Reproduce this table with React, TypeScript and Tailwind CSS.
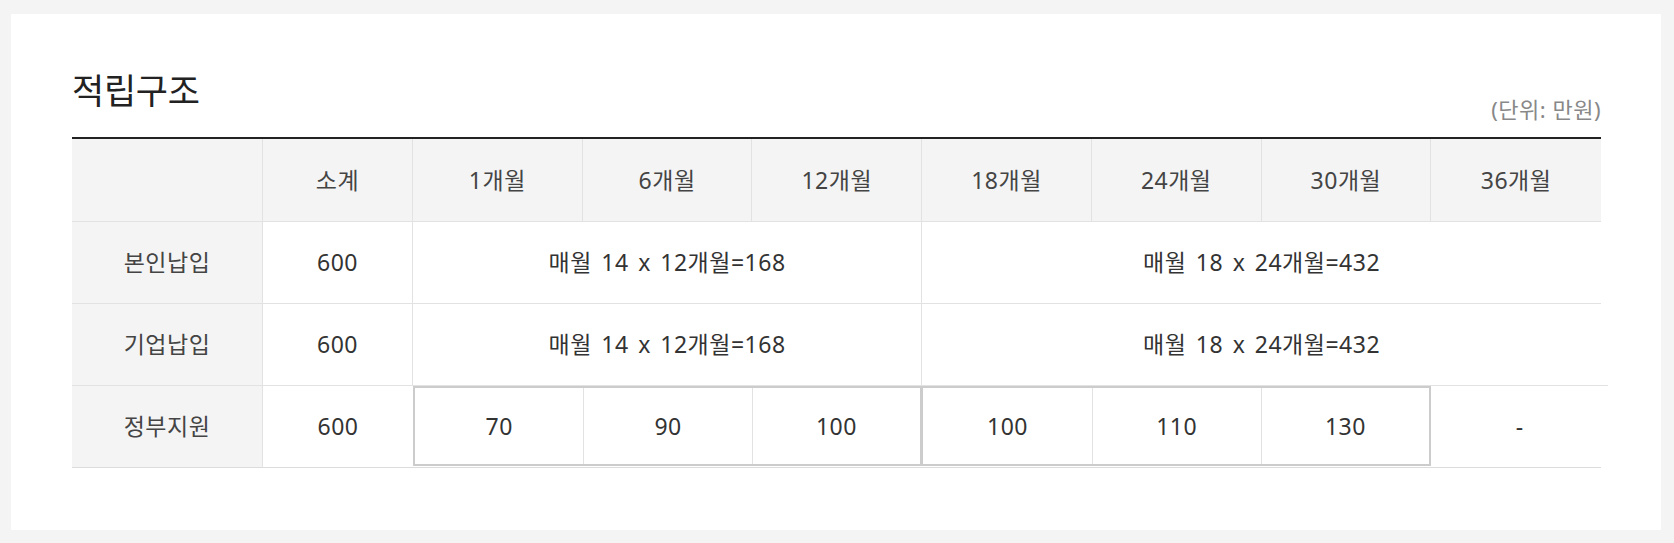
import React from "react";

const font = { fontFamily: "'Noto Sans', 'Noto Sans CJK KR', sans-serif" };

const months = ["1개월", "6개월", "12개월", "18개월", "24개월", "30개월", "36개월"];

export default function App() {
  return (
    <div className="w-[1674px] h-[543px] bg-[#f4f4f4] pt-[14px] pl-[11px]" style={font}>
      <div className="w-[1650px] h-[516px] bg-white pl-[61px] pt-[59px]">
        <div className="w-[1529px] h-[64px] flex justify-between items-end">
          <h2 className="self-start text-[35px] leading-[35px] text-[#222] font-normal tracking-[-0.3px]">적립구조</h2>
          <span className="pb-[17px] text-[22px] leading-[22px] tracking-[0.5px] text-[#888]">(단위: 만원)</span>
        </div>
        <div className="w-[1529px] border-t-2 border-[#222] text-[23px] tracking-[0.5px] [word-spacing:3px] text-[#333]">
          {/* header */}
          <div className="grid grid-cols-[191px_150px_repeat(7,minmax(0,1fr))] h-[83px] bg-[#f4f4f4] border-b border-[#e2e2e2] text-[#444]">
            <div className="border-r border-[#e2e2e2]" />
            <div className="flex items-center justify-center border-r border-[#e2e2e2]">소계</div>
            {months.map((m, i) => (
              <div
                key={m}
                className={`flex items-center justify-center ${i < 6 ? "border-r border-[#e2e2e2]" : ""}`}
              >
                {m}
              </div>
            ))}
          </div>
          {/* row 1 */}
          <div className="grid grid-cols-[191px_150px_repeat(7,minmax(0,1fr))] h-[82px] border-b border-[#e2e2e2]">
            <div className="flex items-center justify-center bg-[#f4f4f4] border-r border-[#e2e2e2] text-[#444]">본인납입</div>
            <div className="flex items-center justify-center border-r border-[#e2e2e2]">600</div>
            <div className="col-span-3 flex items-center justify-center border-r border-[#e2e2e2]">매월 14 x 12개월=168</div>
            <div className="col-span-4 flex items-center justify-center">매월 18 x 24개월=432</div>
          </div>
          {/* row 2 */}
          <div className="w-[1536px] pr-[7px] h-[82px] border-b border-[#e2e2e2]">
            <div className="grid grid-cols-[191px_150px_repeat(7,minmax(0,1fr))] h-full">
              <div className="flex items-center justify-center bg-[#f4f4f4] border-r border-[#e2e2e2] text-[#444]">기업납입</div>
              <div className="flex items-center justify-center border-r border-[#e2e2e2]">600</div>
              <div className="col-span-3 flex items-center justify-center border-r border-[#e2e2e2]">매월 14 x 12개월=168</div>
              <div className="col-span-4 flex items-center justify-center">매월 18 x 24개월=432</div>
            </div>
          </div>
          {/* row 3 */}
          <div className="grid grid-cols-[191px_150px_repeat(7,minmax(0,1fr))] h-[82px] border-b border-[#dcdcdc]">
            <div className="flex items-center justify-center bg-[#f4f4f4] border-r border-[#e2e2e2] text-[#444]">정부지원</div>
            <div className="flex items-center justify-center">600</div>
            <div className="col-span-3 h-[80px] grid grid-cols-3 border-2 border-[#cccccc]">
              <div className="flex items-center justify-center">70</div>
              <div className="flex items-center justify-center border-l border-[#e2e2e2]">90</div>
              <div className="flex items-center justify-center border-l border-[#e2e2e2]">100</div>
            </div>
            <div className="col-span-3 h-[80px] grid grid-cols-3 border-2 border-l border-[#cccccc]">
              <div className="flex items-center justify-center">100</div>
              <div className="flex items-center justify-center border-l border-[#e2e2e2]">110</div>
              <div className="flex items-center justify-center border-l border-[#e2e2e2]">130</div>
            </div>
            <div className="-mr-[7px] flex items-center justify-center">-</div>
          </div>
        </div>
      </div>
    </div>
  );
}
